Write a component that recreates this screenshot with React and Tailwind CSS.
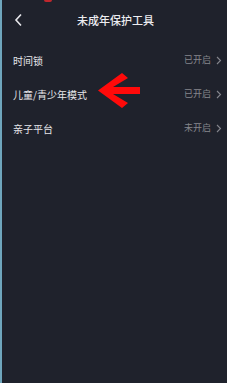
import React from "react";

const Row = ({ label, status, children }) => (
  <div className="relative flex items-center justify-between h-[34px] pl-[11px] pr-[5px]">
    <span className="text-[10px] text-[#e6e6ea]">{label}</span>
    <div className="flex items-center gap-[5px]">
      <span className="text-[9px] text-[#85868d]">{status}</span>
      <svg width="6" height="9" viewBox="0 0 6 9" fill="none">
        <path d="M1 1l3.5 3.5L1 8" stroke="#85868d" strokeWidth="1.1" />
      </svg>
    </div>
    {children}
  </div>
);

export default function App() {
  return (
    <div
      className="relative w-[227px] h-[383px] bg-[#1f222c] flex overflow-hidden"
      style={{ fontFamily: '"Noto Sans CJK SC", "Noto Sans", sans-serif' }}
    >
      <div className="w-[2px] h-full bg-[#6fa6bd] shrink-0" />
      <div className="flex-1 flex flex-col">
        <div className="relative h-[40px] flex items-center justify-center">
          <div className="absolute left-[42px] top-0 w-[8px] h-[2px] bg-[#c0272d] rounded-b" />
          <svg className="absolute left-[12px] top-[13px]" width="9" height="14" viewBox="0 0 9 14" fill="none">
            <path d="M7 1.5L2 7l5 5.5" stroke="#e8e8ec" strokeWidth="1.6" />
          </svg>
          <span className="text-[11px] font-medium text-[#ececf0] ml-[2px] mt-[1px]">未成年保护工具</span>
        </div>
        <div className="h-[3px]" />
        <Row label="时间锁" status="已开启" />
        <Row label="儿童/青少年模式" status="已开启">
          <svg className="absolute left-[96px] top-[-4px]" width="43" height="36" viewBox="0 0 43 36">
            <path d="M0 17.5 L24 0 L30 5 L15 14 L42 14 L42 21 L15 21 L30 30 L24 35 Z" fill="#ff0a0a" />
          </svg>
        </Row>
        <Row label="亲子平台" status="未开启" />
      </div>
    </div>
  );
}
